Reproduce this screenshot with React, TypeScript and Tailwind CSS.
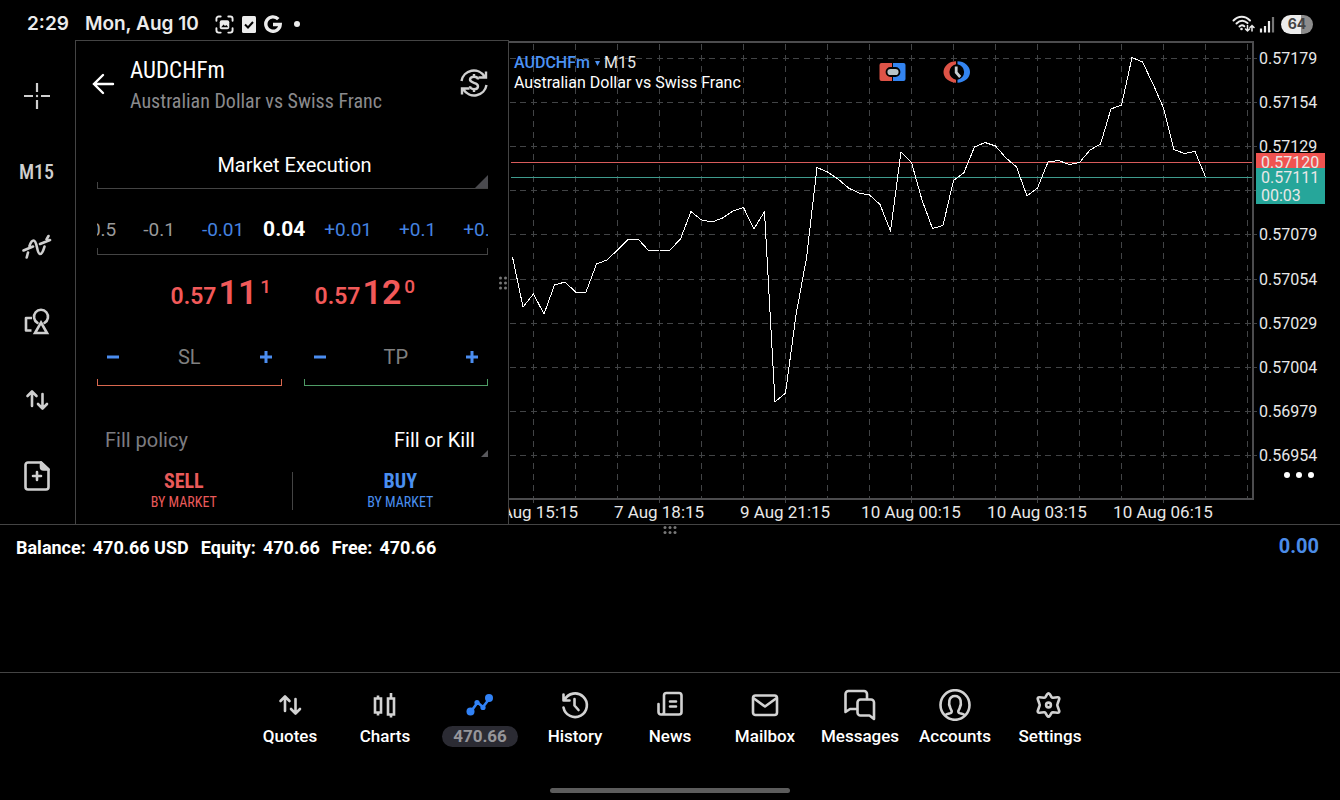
import type { ReactNode } from "react";

const condensed = "font-['Roboto_Condensed',Roboto,sans-serif]";

// y position of the close of each M15 bar, one bar every 10.5 units
const closes = [
  217, 267, 254, 274, 245, 242, 252, 252, 224, 220, 210, 199.5, 199.5, 211, 210, 210, 199, 171.5, 180, 182, 178, 171,
  167.5, 189, 171.5, 362, 353, 275, 218, 127.5, 132, 139, 148, 153, 155, 164.5, 191, 112, 122.5, 160, 188.5, 185.5,
  140.5, 132.5, 107, 102.5, 106, 118, 127, 156, 148, 122, 120.5, 124.5, 122.5, 110, 104, 69, 65, 17.5, 22, 44, 68,
  109.5, 113.5, 111.5, 137,
];

const prices = ["0.57179", "0.57154", "0.57129", "0.57104", "0.57079", "0.57054", "0.57029", "0.57004", "0.56979", "0.56954"];
const times = ["7 Aug 15:15", "7 Aug 18:15", "9 Aug 21:15", "10 Aug 00:15", "10 Aug 03:15", "10 Aug 06:15"];

const priceY = (i: number) => Math.round(18 + i * 44.1) + 0.5;
const linePoints = closes.map((y, i) => `${3.5 + i * 10.5},${y}`).join(" ");

function Icon({ w = 32, h = 32, children }: { w?: number; h?: number; children: ReactNode }) {
  return (
    <svg width={w} height={h} viewBox={`0 0 ${w} ${h}`} fill="none" stroke="currentColor" strokeWidth="2.600" strokeLinecap="round" strokeLinejoin="round" aria-hidden="true">
      {children}
    </svg>
  );
}

const ArrowsIcon = () => (
  <Icon>
    <path d="M11 22V8M6.500 12 11 7.500l4.500 4.500M21.500 10v14M17 20l4.500 4.500L26 20" />
  </Icon>
);

function StatusBar() {
  return (
    <header className="flex h-10 items-center justify-between pt-2 pr-[27px] pl-[27px] font-['Inter',sans-serif] text-[19px] leading-6 font-semibold text-[#ececec]">
      <div className="flex items-center">
        <span className="mr-4">2:29</span>
        <span className="mr-4">Mon, Aug 10</span>
        <svg width="19" height="19" viewBox="0 0 20 20" fill="none" stroke="currentColor" strokeWidth="2" strokeLinecap="round" aria-hidden="true">
          <path d="M1.500 6V4a2.500 2.500 0 0 1 2.500-2.500h2M14 1.500h2A2.500 2.500 0 0 1 18.500 4v2M18.500 14v2a2.500 2.500 0 0 1-2.500 2.500h-2M6 18.500H4A2.500 2.500 0 0 1 1.500 16v-2" />
          <rect x="5" y="5.500" width="10" height="9.500" rx="2" fill="currentColor" stroke="none" />
          <path d="m6.500 13 2.500-3 1.500 1.500 1.500-1 2 2.500z" fill="#000" stroke="none" />
        </svg>
        <svg className="ml-2" width="14" height="17" viewBox="0 0 14 17" fill="none" aria-hidden="true">
          <rect width="14" height="17" rx="1.500" fill="currentColor" />
          <path d="m3 8.500 3 3 5-5.500" stroke="#000" strokeWidth="2" />
        </svg>
        <svg className="ml-2" width="18" height="18" viewBox="0 0 18 18" fill="none" stroke="currentColor" strokeWidth="3.400" aria-hidden="true">
          <path d="M14.300 4.200A7.200 7.200 0 1 0 16.200 9.500H9" />
        </svg>
        <svg className="ml-3" width="6" height="6" viewBox="0 0 6 6" fill="currentColor" aria-hidden="true"><circle cx="3" cy="3" r="3" /></svg>
      </div>
      <div className="flex items-center">
        <svg width="23" height="18" viewBox="0 0 23 18" fill="none" stroke="currentColor" strokeWidth="2" strokeLinecap="round" aria-hidden="true">
          <path d="M1.500 5.500C6.500.500 13 .500 18 5.500M4.500 8.500c3.500-3.500 7.500-3.500 11-.5M7.500 11.500c1.500-1.500 3.300-1.500 4.800-.2" />
          <circle cx="9.500" cy="14" r="1.300" fill="currentColor" stroke="none" />
          <path d="M15.500 10.500v5.500m-2-2 2 2 2-2M20 16v-5.500m-2 2 2-2 2 2" strokeWidth="1.500" />
        </svg>
        <svg className="ml-1" width="16" height="17" viewBox="0 0 16 17" stroke="currentColor" strokeWidth="2.200" aria-hidden="true">
          <path d="M2 16.500v-4M6 16.500V10M10 16.500V5" />
          <path d="M14 16.500V1" stroke="#777" />
        </svg>
        <span className="ml-[6px] flex h-[19px] w-8 items-center justify-center rounded-full bg-linear-to-r from-[#ececec] from-64% to-[#8c8c8c] to-64% text-[14px] font-bold text-[#444]">64</span>
      </div>
    </header>
  );
}

function SideBar() {
  const items: [string, ReactNode][] = [
    ["Crosshair", <Icon><path d="M3 16H12M20 16h9M16 3V12M16 20v9" strokeWidth="2.200" strokeLinecap="butt" /><circle cx="16" cy="16" r="1.200" fill="currentColor" stroke="none" /></Icon>],
    ["Timeframe", <span className={`${condensed} text-[20px] font-medium`}>M15</span>],
    ["Indicators", <Icon><path d="M2.500 18.500 12 14.500M19 12l10-4M5.700 25.500 7 20.500M8.500 14c1-3 2-5.500 4-5.500 4 0 3 13.500 6.500 13.500 2.500 0 3.500-4 4.500-7.500M25.500 7.500 27.500 4" /></Icon>],
    ["Objects", <Icon><path d="M11 10H5v12.500h5.500" strokeLinecap="butt" /><path d="M16.500 14.800a7 7 0 1 1 7 0" /><path d="m20 14.500 6 10.500H14z" strokeLinejoin="miter" /></Icon>],
    ["Trade", <ArrowsIcon />],
    ["New order", <Icon><path d="M20 2.500H7A2.500 2.500 0 0 0 4.500 5v22A2.500 2.500 0 0 0 7 29.500h18a2.500 2.500 0 0 0 2.500-2.500V9.500z" /><path d="M20 2.500V7a2.500 2.500 0 0 0 2.500 2.500h5z" fill="currentColor" /><path d="M16 12v8M12 16h8" /></Icon>],
  ];
  return (
    <nav aria-label="Chart tools" className="flex w-[75px] shrink-0 flex-col pt-[18px] text-[#cfcfcf]">
      {items.map(([label, icon]) => (
        <button key={label} aria-label={label} className="flex h-[76px] items-center justify-center pr-[2px]">{icon}</button>
      ))}
    </nav>
  );
}

function Quote({ base, pips, frac }: { base: string; pips: string; frac: string }) {
  return (
    <div className="flex w-[100px] items-start text-[#f25959]">
      <span className="mt-[13px] text-[23px] leading-6 font-semibold">{base}</span>
      <span className="ml-[2px] text-[34px] leading-10 font-semibold">{pips}</span>
      <span className="mt-[3px] ml-[3px] text-[19px] leading-6 font-medium">{frac}</span>
    </div>
  );
}

function StopField({ name, line }: { name: string; line: string }) {
  return (
    <div className="flex-1">
      <div className="flex h-8 items-center justify-between px-[9px] text-[#4b8df0]">
        <button aria-label={`Decrease ${name}`}><svg width="14" height="14" viewBox="0 0 14 14" stroke="currentColor" strokeWidth="3"><path d="M1 7h12" /></svg></button>
        <input aria-label={name} placeholder={name} className="w-20 text-center text-[20px] text-white outline-none placeholder:text-[#808080]" />
        <button aria-label={`Increase ${name}`}><svg width="14" height="14" viewBox="0 0 14 14" stroke="currentColor" strokeWidth="3"><path d="M1 7h12M7 1v12" /></svg></button>
      </div>
      <div className={`mt-[6px] h-[7px] border-x border-b ${line}`} />
    </div>
  );
}

function OrderPanel() {
  return (
    <section aria-label="New order" className="relative w-[434px] shrink-0 border-x border-t border-[#444]">
      <div className="flex items-start pt-[15px] pr-[19px] pl-[15px]">
        <button aria-label="Back" className="mt-4 text-white">
          <svg width="24" height="24" viewBox="0 0 24 24" fill="none" stroke="currentColor" strokeWidth="2.400" strokeLinecap="round" aria-hidden="true"><path d="M22 12H3M12 3l-9 9 9 9" /></svg>
        </button>
        <div className={`${condensed} ml-[15px] flex-1`}>
          <h1 className="text-[23px] leading-[30px]">AUDCHFm</h1>
          <p className="text-[20px] leading-[30px] text-[#8a8a8d]">Australian Dollar vs Swiss Franc</p>
        </div>
        <button aria-label="Swap currency" className="mt-3 text-[#cfcfcf]">
          <svg width="30" height="30" viewBox="0 0 30 30" fill="none" stroke="currentColor" strokeWidth="2.400" aria-hidden="true">
            <path d="M2.500 13A12.500 12.500 0 0 1 25.500 8.500M27.500 17A12.500 12.500 0 0 1 4.500 21.500M27 3.500V9.500H19.500M3 26.500V20.500H10.500" />
            <path d="M19 11.500c0-1.800-1.700-2.800-4-2.800s-4 1.100-4 2.900c0 4.200 8 2.200 8 6.600 0 1.900-1.700 3-4 3s-4-1.200-4-3M15 6v3M15 21v3" />
          </svg>
        </button>
      </div>

      <div className="pr-5 pl-[21px]">
        <label className="block">
          <span className="sr-only">Execution type</span>
          <select className="mt-[33px] block w-full appearance-none bg-black pl-1 text-[20px] leading-8 outline-none [text-align-last:center]">
            <option>Market Execution</option>
          </select>
        </label>
        <div className="mt-[-5px] flex h-[13px] items-end justify-between border-b border-[#444]">
          <div className="h-[6px] border-l border-[#444]" />
          <svg width="13" height="13" viewBox="0 0 13 13" fill="#4a4a4e" aria-hidden="true"><path d="M13 0v13H0z" /></svg>
        </div>

        <div className="mt-[25px] flex h-8 items-center justify-center gap-[27px] overflow-hidden text-[19px] whitespace-nowrap text-[#4583e0]">
          <button className="text-[#9a9a9a]">-0.5</button>
          <button className="text-[#9a9a9a]">-0.1</button>
          <button>-0.01</button>
          <input aria-label="Volume" defaultValue="0.04" className="mx-[-9px] w-11 shrink-0 text-center text-[21px] font-bold text-white outline-none" />
          <button>+0.01</button>
          <button>+0.1</button>
          <button>+0.5</button>
        </div>
        <div className="mt-[2px] h-[7px] border-x border-b border-[#444]" />

        <div className="mt-[17px] flex justify-center gap-11">
          <Quote base="0.57" pips="11" frac="1" />
          <Quote base="0.57" pips="12" frac="0" />
        </div>

        <div className="mt-[29px] flex gap-[22px]">
          <StopField name="SL" line="border-[#d9684f]" />
          <StopField name="TP" line="border-[#4f9c66]" />
        </div>

        <div className="mt-[38px] flex h-8 items-center justify-between pr-[13px] pl-2 text-[20px]">
          <label htmlFor="fill" className="text-[#7c7c80]">Fill policy</label>
          <select id="fill" className="appearance-none bg-black outline-none">
            <option>Fill or Kill</option>
          </select>
        </div>
        <svg className="mt-[-6px] ml-auto block" width="7" height="7" viewBox="0 0 7 7" fill="#58585c" aria-hidden="true"><path d="M7 0v7H0z" /></svg>
      </div>

      <div className={`${condensed} mt-[15px] flex h-[38px] divide-x divide-[#444] text-[14px]`}>
        <button className="flex flex-1 flex-col items-center justify-center text-[#ea5a5a]"><b className="text-[20px] leading-[22px]">SELL</b><span className="leading-5">BY MARKET</span></button>
        <button className="flex flex-1 flex-col items-center justify-center text-[#4a8ff0]"><b className="text-[20px] leading-[22px]">BUY</b><span className="leading-5">BY MARKET</span></button>
      </div>

      <svg className="absolute top-[235px] right-0" width="10" height="14" viewBox="0 0 10 14" fill="#777" aria-hidden="true">
        {[2, 7, 12].map((y) => <g key={y}><circle cx="2.500" cy={y} r="1.500" /><circle cx="7.500" cy={y} r="1.500" /></g>)}
      </svg>
    </section>
  );
}

function Chart() {
  return (
    <section aria-label="AUDCHFm chart" className="relative min-w-0 flex-1">
      <svg viewBox="0 0 831 484" className="block h-auto w-full" fontSize="16" fill="#e8e8e8">
        <g stroke="#424446" shapeRendering="crispEdges">
          {prices.map((p, i) => <path key={p} d={`M.5 ${priceY(i)}H743`} strokeDasharray="6 4.500" />)}
          {Array.from({ length: 18 }, (_, i) => <path key={i} d={`M${24.5 + i * 42} 4V458`} strokeDasharray="6 5.025" />)}
          <path d="M0 2H744V459H0" fill="none" strokeWidth="2" stroke="#4c4c4e" />
          {prices.map((p, i) => <path key={p} d={`M745 ${priceY(i)}h3`} />)}
          {times.map((t, i) => <path key={t} d={`M${24.5 + i * 126} 460v3`} />)}
          <path d="M2 122.500H743" stroke="#d95c5c" />
          <path d="M2 137.500H743" stroke="#3f9c8e" />
        </g>
        <polyline points={linePoints} fill="none" stroke="#fff" shapeRendering="crispEdges" />
        {prices.map((p, i) => i !== 3 && <text key={p} x="750" y={priceY(i) + 5.5}>{p}</text>)}
        <g fontSize="17">
          {times.map((t, i) => <text key={t} x={24 + i * 126} y="478" textAnchor="middle">{t}</text>)}
        </g>
        <rect x="747" y="113" width="69" height="16" fill="#ef5350" />
        <text x="752" y="128">0.57120</text>
        <rect x="747" y="128" width="69" height="36" fill="#26a69a" />
        <text x="752" y="143">0.57111</text>
        <text x="752" y="161">00:03</text>
      </svg>

      <div className="absolute top-[13px] left-[5px] text-[16px] leading-5">
        <button className="flex items-center font-medium text-[#4b92f5]">
          AUDCHFm
          <svg className="mr-1 ml-[5px]" width="5" height="5" viewBox="0 0 5 5" fill="currentColor" aria-hidden="true"><path d="M0 0h5L2.500 5z" /></svg>
          <span className="font-normal text-[#e8e8e8]">M15</span>
        </button>
        <p>Australian Dollar vs Swiss Franc</p>
      </div>

      <div className="absolute top-[21px] left-[370px] flex gap-[37px]">
        <button aria-label="One click trading">
          <svg width="27" height="22" viewBox="0 0 27 22" aria-hidden="true">
            <path d="M13 2H2.500A2 2 0 0 0 .500 4v14a2 2 0 0 0 2 2H13z" fill="#dd5347" />
            <path d="M14 2h10.500a2 2 0 0 1 2 2v14a2 2 0 0 1-2 2H14z" fill="#3384f0" />
            <rect x="7.500" y="7" width="13" height="8" rx="4" fill="#b8c4c8" stroke="#000" strokeWidth="1.800" />
          </svg>
        </button>
        <button aria-label="Market hours">
          <svg width="27" height="22" viewBox="0 0 27 22" fill="none" aria-hidden="true">
            <ellipse cx="13.500" cy="11" rx="12" ry="10" fill="#000" />
            <path d="M13 .300A12.500 10.700 0 0 0 13 21.700V18.800A8.500 8 0 0 1 13 3.200z" fill="#dd5347" />
            <path d="M14.500.300A12.500 10.700 0 0 1 14.500 21.700V18.800A8.500 8 0 0 0 14.500 3.200z" fill="#3384f0" />
            <path d="M13.200 5.500v6l4 4.500" stroke="#c8ccd0" strokeWidth="2.800" />
          </svg>
        </button>
      </div>

      <button aria-label="More" className="absolute top-[432px] right-[26px]">
        <svg width="30" height="6" viewBox="0 0 30 6" fill="#fff" aria-hidden="true"><circle cx="3" cy="3" r="3" /><circle cx="15" cy="3" r="3" /><circle cx="27" cy="3" r="3" /></svg>
      </button>
    </section>
  );
}

function AccountBar() {
  return (
    <section aria-label="Account" className="relative flex min-h-[148px] flex-1 items-start justify-between border-t border-[#444] pt-[11px] pr-[21px] pl-4 text-[18px] leading-6 font-bold">
      <dl className="flex gap-3">
        <div className="flex gap-[7px]"><dt>Balance:</dt><dd>470.66 USD</dd></div>
        <div className="flex gap-[7px]"><dt>Equity:</dt><dd>470.66</dd></div>
        <div className="flex gap-[7px]"><dt>Free:</dt><dd>470.66</dd></div>
      </dl>
      <span className="text-[20px] leading-5 text-[#4b8ce8]">0.00</span>
      <svg className="absolute top-0 left-1/2 -translate-x-1/2" width="14" height="10" viewBox="0 0 14 10" fill="#777" aria-hidden="true">
        {[2, 7, 12].map((x) => <g key={x}><circle cx={x} cy="2.500" r="1.500" /><circle cx={x} cy="7.500" r="1.500" /></g>)}
      </svg>
    </section>
  );
}

const tabs: [string, ReactNode][] = [
  ["Quotes", <ArrowsIcon />],
  ["Charts", <Icon><path d="M6 9.500h6v14H6zM19 9.500h6v16h-6zM9 6.500v3M9 23.500v3M22 4v5.500M22 25.500v3" strokeLinecap="butt" strokeLinejoin="miter" /></Icon>],
  ["470.66", <Icon><path d="m7 22.500 6.500-9L19 18l6.500-8.500" /><g fill="currentColor" stroke="none"><circle cx="6.500" cy="22.500" r="4" /><circle cx="25" cy="9" r="4" /><circle cx="13" cy="13.500" r="2.600" /><circle cx="19" cy="18.500" r="2.600" /></g></Icon>],
  ["History", <Icon><path d="M4.500 5.500v6h6M5.500 11A11.800 11.800 0 1 1 4.500 18.500M15.500 10v6.500l4 4.500" /></Icon>],
  ["News", <Icon><path d="M10 25.500V6.500A2.500 2.500 0 0 1 12.500 4H25a2.500 2.500 0 0 1 2.500 2.500V23a2.500 2.500 0 0 1-2.500 2.500H7A2.500 2.500 0 0 1 4.500 23v-8M10 23a2.500 2.500 0 0 1-2.500 2.500M16 12.500h6M16 17.500h6" /></Icon>],
  ["Mailbox", <Icon><rect x="4" y="6.500" width="24" height="19.500" rx="2.500" /><path d="m5 9.500 11 8 11-8" /></Icon>],
  ["Messages", <Icon w={34}><path d="M14 20H7l-4.500 3V5A3 3 0 0 1 5.500 2H21a3 3 0 0 1 3 3v5" /><path d="M17.500 10.500H28a3 3 0 0 1 3 3V30l-4.500-3.500h-9a3 3 0 0 1-3-3v-10a3 3 0 0 1 3-3z" /></Icon>],
  ["Accounts", <Icon><ellipse cx="16" cy="16" rx="14.500" ry="14.800" /><path d="M6.500 26c2-1.500 5.500-1.500 6-2.500.6-1.200 0-2.500-1-4-2.500-4.500-2-12.500 4.500-12.500s7 8 4.500 12.500c-1 1.500-1.600 2.800-1 4 .5 1 4 1 6 2.500" /></Icon>],
  ["Settings", <Icon><path d="M13.200 5.200q1.300-2 2.600 0L17.500 8q.5.800 1.500.7l4.500-.4q2.300-.1 1.700 2L23.500 15q-.4 1 0 2l1.700 4.700q.6 2.100-1.700 2L19 23.300q-1 0-1.500.7l-1.700 2.800q-1.300 2-2.600 0L11.500 24q-.5-.8-1.500-.7l-4.500.4q-2.300.1-1.700-2L5.500 17q.4-1 0-2L3.800 10.300q-.6-2.100 1.700-2l4.500.4q1 0 1.500-.7z" /><circle cx="14.500" cy="16" r="2.400" /></Icon>],
];

function BottomNav() {
  return (
    <footer className="border-t border-[#444]">
      <nav aria-label="Main" className="flex justify-center pt-4">
        {tabs.map(([label, icon], i) => (
          <a key={label} href="#" aria-current={i === 2 ? "page" : undefined} className={`flex w-[95px] flex-col items-center ${i === 2 ? "text-[#3182f6]" : "text-[#d2d2d2]"}`}>
            {icon}
            <span className={i === 2 ? "mt-[5px] rounded-full bg-[#2b2b33] px-[11px] text-[17px] leading-[21px] font-bold text-[#96969a]" : "mt-[5px] text-[17px] leading-[21px] font-medium text-white"}>{label}</span>
          </a>
        ))}
      </nav>
      <div className="mx-auto mt-[41px] mb-[7px] h-[5px] w-60 rounded-full bg-[#5c5c5c]" />
    </footer>
  );
}

export default function App() {
  return (
    <div className="flex min-h-screen flex-col bg-black font-['Roboto',sans-serif] text-white">
      <StatusBar />
      <main className="flex flex-1 flex-col">
        <div className="flex">
          <SideBar />
          <OrderPanel />
          <Chart />
        </div>
        <AccountBar />
      </main>
      <BottomNav />
    </div>
  );
}
